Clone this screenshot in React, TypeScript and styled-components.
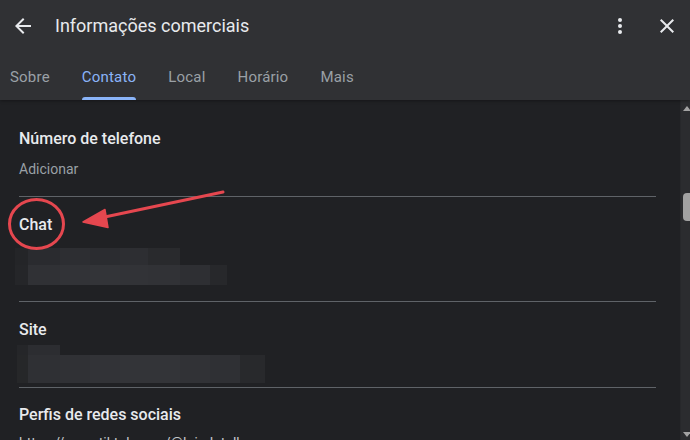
import { FC } from 'react';
import styled, { createGlobalStyle } from 'styled-components';

const GlobalStyle = createGlobalStyle`
  html, body {
    margin: 0;
    padding: 0;
    background: #202124;
    overflow: hidden;
  }
  * {
    box-sizing: border-box;
  }
`;

const Page = styled.div`
  position: relative;
  width: 690px;
  height: 440px;
  display: flex;
  flex-direction: column;
  overflow: hidden;
  font-family: Roboto, 'Noto Sans', Arial, sans-serif;
  color: #e8eaed;
  background: #202124;
`;

const Header = styled.header`
  position: relative;
  z-index: 2;
  height: 100px;
  flex: none;
  background: #303134;
  box-shadow: 0 1px 3px rgba(0, 0, 0, 0.35);
  display: flex;
  flex-direction: column;
`;

const TitleRow = styled.div`
  height: 50px;
  display: flex;
  align-items: center;
  padding: 1px 11px 0 11px;
`;

const IconButton = styled.button`
  width: 24px;
  height: 24px;
  padding: 0;
  border: 0;
  background: none;
  color: #e8eaed;
  display: flex;
  align-items: center;
  justify-content: center;
  cursor: pointer;
  svg {
    width: 24px;
    height: 24px;
    fill: currentColor;
  }
`;

const Title = styled.h1`
  margin: 0 0 0 20px;
  flex: 1;
  font-size: 18px;
  font-weight: 400;
  letter-spacing: 0;
  line-height: 24px;
  color: #e8eaed;
`;

const Actions = styled.div`
  display: flex;
  align-items: center;
  gap: 23.5px;
`;

const Tabs = styled.nav`
  height: 50px;
  display: flex;
  margin-left: -6px;
`;

const Tab = styled.div<{ $active?: boolean }>`
  position: relative;
  padding: 4px 16px 0;
  display: flex;
  align-items: center;
  font-size: 15px;
  font-weight: 400;
  line-height: 20px;
  letter-spacing: 0.2px;
  color: ${(p) => (p.$active ? '#8ab4f8' : '#9aa0a6')};
  &::after {
    content: '';
    display: ${(p) => (p.$active ? 'block' : 'none')};
    position: absolute;
    left: 16px;
    right: 16px;
    bottom: 0;
    height: 3px;
    border-radius: 3px 3px 0 0;
    background: #8ab4f8;
  }
`;

const Body = styled.div`
  flex: 1;
  display: flex;
  min-height: 0;
`;

const Content = styled.main`
  flex: 1;
  padding-top: 11px;
  overflow: hidden;
`;

const Section = styled.section<{ $top?: number; $bottom?: number; $last?: boolean }>`
  margin: 0 24px 0 19px;
  padding-top: ${(p) => p.$top ?? 16}px;
  padding-bottom: ${(p) => p.$bottom ?? 16}px;
  border-bottom: ${(p) => (p.$last ? 'none' : '1px solid #5f6368')};
`;

const Label = styled.h2`
  margin: 0;
  font-size: 16px;
  font-weight: 500;
  line-height: 24px;
  color: #e8eaed;
`;

const Value = styled.div<{ $light?: boolean; $top?: number }>`
  margin-top: ${(p) => p.$top ?? 8}px;
  font-size: 14px;
  line-height: 20px;
  color: ${(p) => (p.$light ? '#c4c7ca' : '#9aa0a6')};
  white-space: nowrap;
`;

const MosaicBox = styled.div<{ $top: number; $left: number }>`
  margin-top: ${(p) => p.$top}px;
  margin-left: ${(p) => p.$left}px;
  display: flex;
  flex-direction: column;
`;

const MosaicRow = styled.div`
  display: flex;
`;

const Cell = styled.div`
  flex: none;
`;

const Scrollbar = styled.aside`
  width: 10px;
  flex: none;
  background: #2b2c2f;
  border-left: 1px solid #27282b;
  padding: 6px 0 3px 2px;
  display: flex;
  flex-direction: column;
  svg {
    display: block;
    fill: #a3a3a3;
  }
`;

const Thumb = styled.div`
  margin-top: 82px;
  height: 28px;
  width: 10px;
  border-radius: 4px;
  background: #a2a2a2;
`;

const DownArrow = styled.div`
  margin-top: auto;
`;

const Annotation = styled.svg`
  position: absolute;
  left: 0;
  top: 0;
  z-index: 3;
  pointer-events: none;
`;

type Row = { h: number; cells: [number, string][] };

const chatMosaic: Row[] = [
  {
    h: 17,
    cells: [
      [13, '#242528'],
      [32, '#2a2b2f'],
      [30, '#2d2e32'],
      [30, '#2b2c30'],
      [28, '#2d2e32'],
      [32, '#292a2d'],
    ],
  },
  {
    h: 20,
    cells: [
      [13, '#252629'],
      [32, '#303135'],
      [30, '#323337'],
      [30, '#333438'],
      [28, '#323337'],
      [32, '#313236'],
      [30, '#2e2f33'],
      [17, '#27282b'],
    ],
  },
];

const siteMosaic: Row[] = [
  {
    h: 10,
    cells: [
      [11, '#252629'],
      [32, '#2c2d31'],
    ],
  },
  {
    h: 28,
    cells: [
      [11, '#262729'],
      [32, '#2f3034'],
      [30, '#303135'],
      [30, '#323337'],
      [30, '#333438'],
      [30, '#333438'],
      [30, '#313236'],
      [30, '#2f3034'],
      [25, '#28292c'],
    ],
  },
];

const Mosaic: FC<{ rows: Row[]; top: number; left: number }> = ({ rows, top, left }) => (
  <MosaicBox $top={top} $left={left}>
    {rows.map((row, i) => (
      <MosaicRow key={i} style={{ height: row.h }}>
        {row.cells.map(([w, c], j) => (
          <Cell key={j} style={{ width: w, background: c }} />
        ))}
      </MosaicRow>
    ))}
  </MosaicBox>
);

const BackIcon = () => (
  <svg viewBox="0 0 24 24">
    <path d="M20 11H7.83l5.59-5.59L12 4l-8 8 8 8 1.41-1.41L7.83 13H20v-2z" />
  </svg>
);

const MoreIcon = () => (
  <svg viewBox="0 0 24 24">
    <circle cx="12" cy="6" r="2" />
    <circle cx="12" cy="12" r="2" />
    <circle cx="12" cy="18" r="2" />
  </svg>
);

const CloseIcon = () => (
  <svg viewBox="0 0 24 24">
    <path d="M19 6.41 17.59 5 12 10.59 6.41 5 5 6.41 10.59 12 5 17.59 6.41 19 12 13.41 17.59 19 19 17.59 13.41 12z" />
  </svg>
);

export default function App() {
  return (
    <>
      <GlobalStyle />
      <Page>
        <Header>
          <TitleRow>
            <IconButton aria-label="Voltar">
              <BackIcon />
            </IconButton>
            <Title>Informações comerciais</Title>
            <Actions>
              <IconButton aria-label="Mais opções">
                <MoreIcon />
              </IconButton>
              <IconButton aria-label="Fechar">
                <CloseIcon />
              </IconButton>
            </Actions>
          </TitleRow>
          <Tabs>
            <Tab>Sobre</Tab>
            <Tab $active>Contato</Tab>
            <Tab>Local</Tab>
            <Tab>Horário</Tab>
            <Tab>Mais</Tab>
          </Tabs>
        </Header>
        <Body>
          <Content>
            <Section $bottom={17}>
              <Label>Número de telefone</Label>
              <Value>Adicionar</Value>
            </Section>
            <Section>
              <Label>Chat</Label>
              <Mosaic rows={chatMosaic} top={11} left={-4} />
            </Section>
            <Section $bottom={4}>
              <Label>Site</Label>
              <Mosaic rows={siteMosaic} top={3} left={-2} />
            </Section>
            <Section $top={15} $last>
              <Label>Perfis de redes sociais</Label>
              <Value $light $top={6}>
                https://www.tiktok.com/@lojadetalhes
              </Value>
            </Section>
          </Content>
          <Scrollbar>
            <svg width="8" height="5" viewBox="0 0 8 5">
              <path d="M4 0 8 5H0z" />
            </svg>
            <Thumb />
            <DownArrow>
              <svg width="8" height="5" viewBox="0 0 8 5">
                <path d="M0 0h8L4 5z" />
              </svg>
            </DownArrow>
          </Scrollbar>
        </Body>
        <Annotation width="690" height="440" viewBox="0 0 690 440">
          <ellipse cx="36.5" cy="224" rx="27" ry="24.5" fill="none" stroke="#e5474f" strokeWidth="3" />
          <line x1="223" y1="192" x2="100" y2="218" stroke="#e5474f" strokeWidth="3" strokeLinecap="round" />
          <path d="M83 222 105 209.5 108 227.5z" fill="#e5474f" stroke="#e5474f" strokeWidth="1.5" strokeLinejoin="round" />
        </Annotation>
      </Page>
    </>
  );
}
